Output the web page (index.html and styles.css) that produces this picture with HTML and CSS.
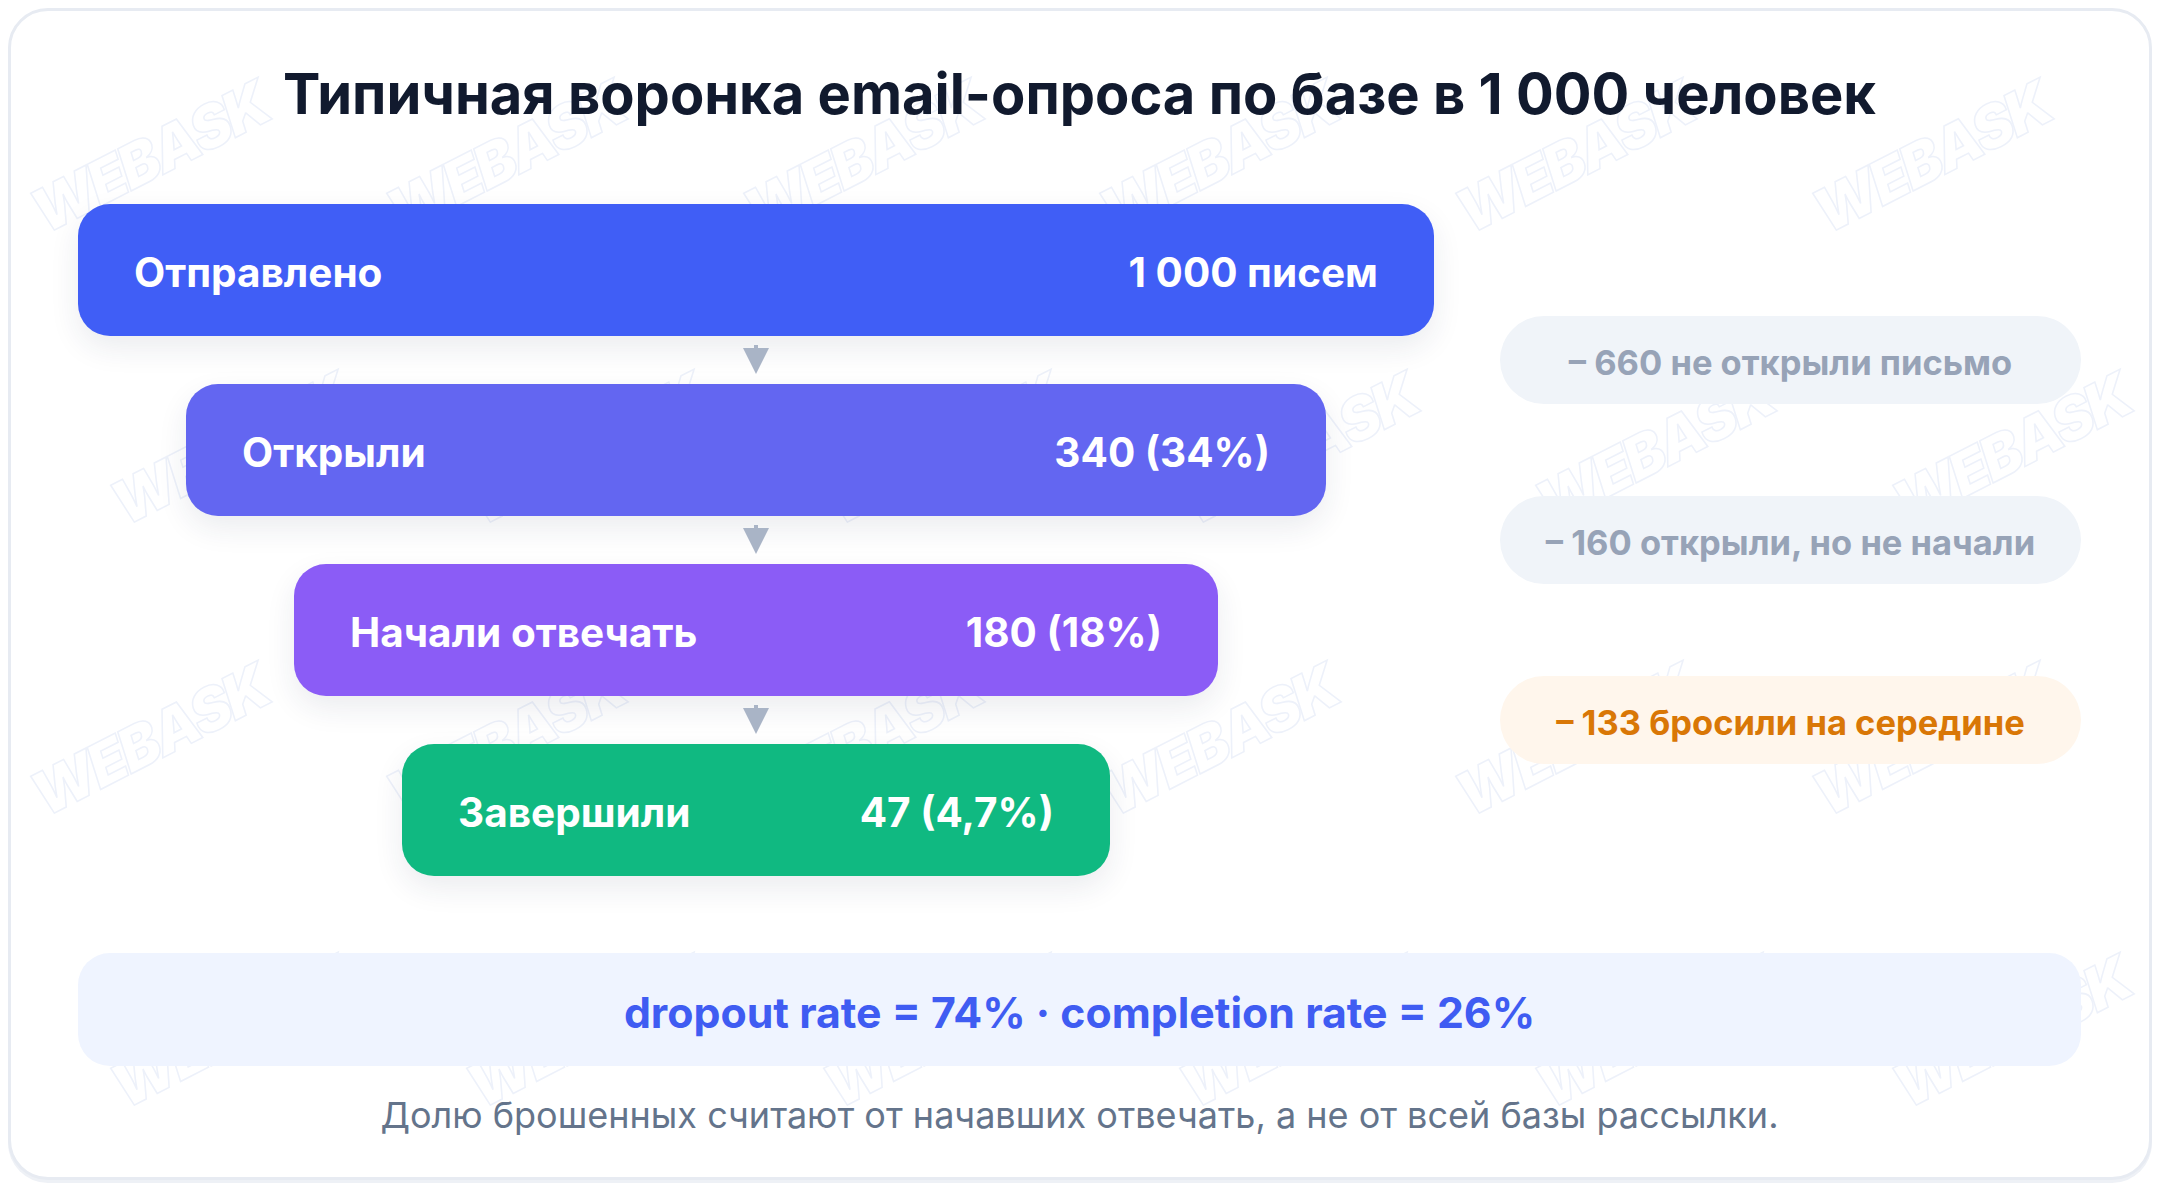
FILE: index.html
```html
<!DOCTYPE html>
<html lang="ru">
<head>
<meta charset="utf-8">
<title>Типичная воронка email-опроса</title>
<link rel="stylesheet" href="styles.css">
</head>
<body>
<div class="card">
  <div class="wm" aria-hidden="true">
    <span>WEBASK</span><span>WEBASK</span><span>WEBASK</span><span>WEBASK</span><span>WEBASK</span><span>WEBASK</span>
    <span>WEBASK</span><span>WEBASK</span><span>WEBASK</span><span>WEBASK</span><span>WEBASK</span><span>WEBASK</span>
    <span>WEBASK</span><span>WEBASK</span><span>WEBASK</span><span>WEBASK</span><span>WEBASK</span><span>WEBASK</span>
    <span>WEBASK</span><span>WEBASK</span><span>WEBASK</span><span>WEBASK</span><span>WEBASK</span><span>WEBASK</span>
  </div>
  <div class="content">
    <h1 class="title">Типичная воронка email-опроса по базе в 1&nbsp;000 человек</h1>
    <div class="main">
      <div class="funnel">
        <div class="bar bar1"><span>Отправлено</span><span>1&nbsp;000 писем</span></div>
        <div class="arrow"><svg width="26" height="30" viewBox="0 0 26 30"><rect x="11" y="0" width="4" height="3" fill="#a9b4c6"/><polygon points="0,3 26,3 13,29" fill="#a9b4c6"/></svg></div>
        <div class="bar bar2"><span>Открыли</span><span>340 (34%)</span></div>
        <div class="arrow"><svg width="26" height="30" viewBox="0 0 26 30"><rect x="11" y="0" width="4" height="3" fill="#a9b4c6"/><polygon points="0,3 26,3 13,29" fill="#a9b4c6"/></svg></div>
        <div class="bar bar3"><span>Начали отвечать</span><span>180 (18%)</span></div>
        <div class="arrow"><svg width="26" height="30" viewBox="0 0 26 30"><rect x="11" y="0" width="4" height="3" fill="#a9b4c6"/><polygon points="0,3 26,3 13,29" fill="#a9b4c6"/></svg></div>
        <div class="bar bar4"><span>Завершили</span><span>47 (4,7%)</span></div>
      </div>
      <div class="losses">
        <div class="pill">– 660 не открыли письмо</div>
        <div class="pill">– 160 открыли, но не начали</div>
        <div class="pill pill-warn">– 133 бросили на середине</div>
      </div>
    </div>
    <div class="summary">dropout rate = 74% · completion rate = 26%</div>
    <p class="note">Долю брошенных считают от начавших отвечать, а не от всей базы рассылки.</p>
  </div>
</div>
</body>
</html>
```
FILE: styles.css
```css
* { box-sizing: border-box; }
html, body { margin: 0; padding: 0; background: #ffffff; }
body {
  padding: 8px;
  font-family: Inter, "Noto Sans", "Liberation Sans", sans-serif;
}
.card {
  position: relative;
  height: 1172px;
  border: 3px solid #e7ebf2;
  border-radius: 40px;
  background: #ffffff;
  overflow: hidden;
  box-shadow: 0 3px 0 #eef1f6;
}
.wm {
  position: absolute;
  inset: 0;
  display: grid;
  grid-template-columns: repeat(6, 1fr);
  grid-template-rows: repeat(4, 1fr);
  pointer-events: none;
  z-index: 0;
}
.wm span {
  display: flex;
  align-items: center;
  justify-content: center;
  font-family: Inter, "Liberation Sans", sans-serif;
  font-weight: 900;
  font-style: italic;
  font-size: 60px;
  letter-spacing: -3px;
  color: transparent;
  -webkit-text-stroke: 1.5px #edf1fa;
  transform: translateX(-40px) rotate(-27deg);
}
.wm span:nth-child(12n+7),
.wm span:nth-child(12n+8),
.wm span:nth-child(12n+9),
.wm span:nth-child(12n+10),
.wm span:nth-child(12n+11),
.wm span:nth-child(12n+12) {
  transform: translateX(40px) rotate(-27deg);
}
.content {
  position: relative;
  z-index: 1;
  padding: 50px 68px 0 67px;
}
.title {
  margin: 0;
  text-align: center;
  font-size: 56px;
  line-height: 67px;
  font-weight: 700;
  color: #111a2e;
  letter-spacing: 0;
}
.main {
  display: flex;
  gap: 66px;
  margin-top: 76px;
}
.funnel {
  width: 1356px;
  display: flex;
  flex-direction: column;
  align-items: center;
}
.bar {
  height: 132px;
  border-radius: 32px;
  display: flex;
  align-items: center;
  justify-content: space-between;
  padding: 5px 56px 0 56px;
  color: #ffffff;
  font-size: 40.5px;
  font-weight: 700;
  box-shadow: 0 12px 30px rgba(30, 41, 80, 0.09);
}
.bar1 { width: 1356px; background: #405ef6; }
.bar2 { width: 1140px; background: #6366f1; }
.bar3 { width: 924px; background: #8b5cf6; }
.bar4 { width: 708px; background: #10b981; }
.arrow {
  height: 48px;
  display: flex;
  align-items: flex-start;
  justify-content: center;
  padding-top: 9px;
}
.arrow svg { display: block; }
.losses {
  flex: 1;
  display: flex;
  flex-direction: column;
  gap: 92px;
  padding-top: 112px;
}
.pill {
  height: 88px;
  border-radius: 44px;
  background: #f0f4f9;
  color: #97a3b7;
  font-size: 34.5px;
  font-weight: 700;
  padding-top: 4px;
  display: flex;
  align-items: center;
  justify-content: center;
}
.pill-warn {
  background: #fff6ec;
  color: #d97706;
}
.summary {
  margin-top: 77px;
  height: 113px;
  border-radius: 32px;
  background: #eff4ff;
  color: #3f5cf2;
  font-size: 42.8px;
  font-weight: 700;
  padding-top: 5px;
  display: flex;
  align-items: center;
  justify-content: center;
}
.note {
  margin: 28px 0 0;
  text-align: center;
  font-size: 36px;
  line-height: 42px;
  color: #64748b;
}
```
